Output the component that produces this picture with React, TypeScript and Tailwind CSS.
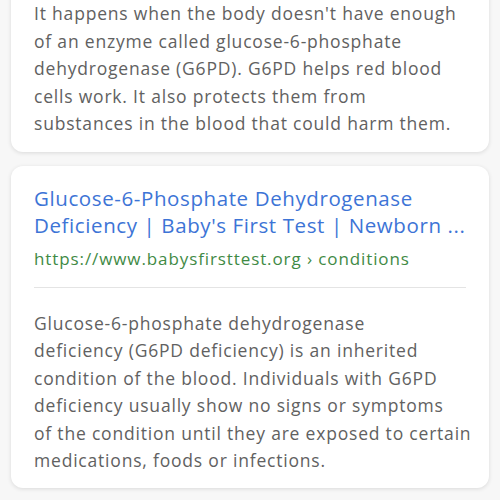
const snippet = [
  "It happens when the body doesn't have enough",
  "of an enzyme called glucose-6-phosphate",
  "dehydrogenase (G6PD). G6PD helps red blood",
  "cells work. It also protects them from",
  "substances in the blood that could harm them.",
];

const body = [
  "Glucose-6-phosphate dehydrogenase",
  "deficiency (G6PD deficiency) is an inherited",
  "condition of the blood. Individuals with G6PD",
  "deficiency usually show no signs or symptoms",
  "of the condition until they are exposed to certain",
  "medications, foods or infections.",
];

export default function App() {
  return (
    <div
      className="h-[500px] overflow-hidden bg-[#f7f7f7] px-[11px]"
      style={{ fontFamily: '"Open Sans", sans-serif' }}
    >
      {/* result snippet, top cut off */}
      <div className="-mt-[20px] rounded-xl bg-white px-[23px] pb-[14px] pt-[20px] shadow-[0_1px_4px_rgba(0,0,0,0.12)]">
        <div className="text-[17.5px] leading-[27.5px] tracking-[0.8px] text-[#616161]">
          {snippet.map((l, i) => (
            <div key={i} className="whitespace-nowrap">{l}</div>
          ))}
        </div>
      </div>

      {/* search result card */}
      <div className="mt-[14px] rounded-xl bg-white px-[23px] pb-[13px] pt-[19px] shadow-[0_1px_4px_rgba(0,0,0,0.12)]">
        <div className="text-[20.5px] leading-[27px] tracking-[0.6px] text-[#3d74d6]">
          <div className="whitespace-nowrap">Glucose-6-Phosphate Dehydrogenase</div>
          <div className="whitespace-nowrap">Deficiency | Baby's First Test | Newborn ...</div>
        </div>
        <div className="mt-[8px] text-[17px] leading-[24px] tracking-[0.9px] text-[#3f8a45]">
          https://www.babysfirsttest.org › conditions
        </div>
        <div className="mt-[16px] h-px bg-[#e4e4e4]" />
        <div className="mt-[22px] text-[17.5px] leading-[27.5px] tracking-[0.8px] text-[#616161]">
          {body.map((l, i) => (
            <div key={i} className="whitespace-nowrap">{l}</div>
          ))}
        </div>
      </div>
    </div>
  );
}
